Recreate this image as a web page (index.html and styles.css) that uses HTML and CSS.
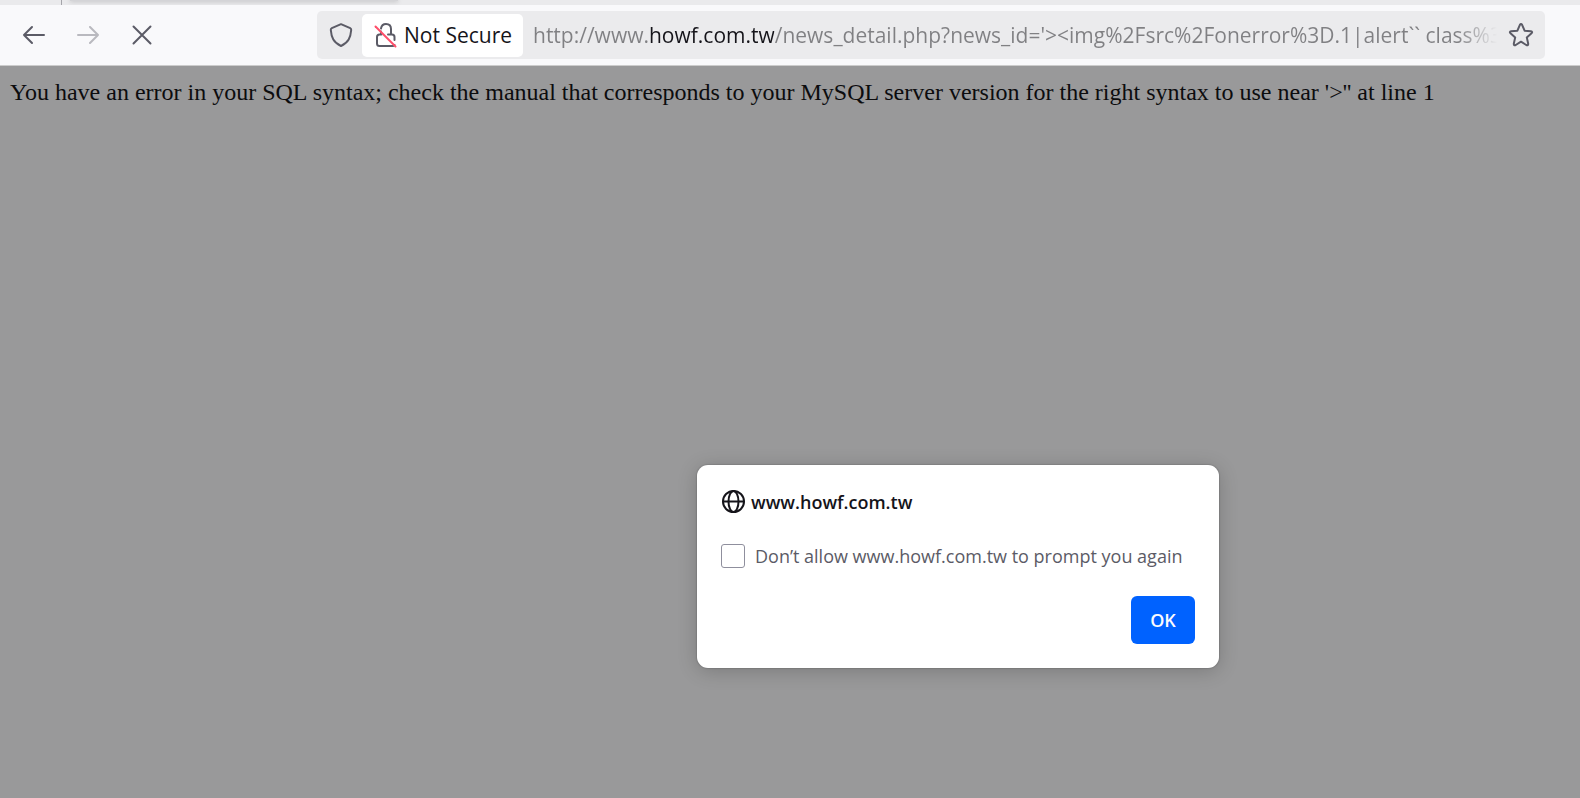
FILE: index.html
```html
<!DOCTYPE html>
<html lang="en">
<head>
  <meta charset="UTF-8" />
  <meta name="viewport" content="width=device-width, initial-scale=1.0" />
  <title>www.howf.com.tw</title>
  <link rel="stylesheet" href="styles.css">
</head>
<body>
<div class="tabstrip">
  <div class="tab-separator"></div>
  <div class="tab"></div>
</div>

<header class="toolbar">
  <nav class="nav-buttons">
    <button class="icon-button" type="button" aria-label="Back">
      <svg width="24" height="24" viewBox="0 0 24 24"><path d="M22 12H2M10 4l-8 8 8 8" /></svg>
    </button>
    <button class="icon-button" type="button" aria-label="Forward" disabled>
      <svg width="24" height="24" viewBox="0 0 24 24"><path d="M2 12h20M14 4l8 8-8 8" /></svg>
    </button>
    <button class="icon-button" type="button" aria-label="Stop">
      <svg width="24" height="24" viewBox="0 0 24 24"><path d="M3.5 3.5l17 17M20.500 3.500l-17 17" /></svg>
    </button>
  </nav>

  <div class="urlbar">
    <button class="shield" type="button" aria-label="Tracking protection">
      <svg width="24" height="26" viewBox="0 0 24 26"><path d="M12 2.200L21.200 6.100C22 6.500 22.300 7 22.200 8C21.600 15.500 19.500 20.500 12 24C4.500 20.500 2.400 15.500 1.800 8C1.700 7 2 6.500 2.800 6.100Z" /></svg>
    </button>
    <button class="identity" type="button">
      <svg width="24" height="26" viewBox="0 0 24 26">
        <path d="M7 6.500C7.500 3.500 9.500 2 12 2C15 2 17 4 17 7V11.500M7 9.500V12M7.500 12.500H5.500Q3 12.500 3 15V21.500Q3 24 5.500 24H18.500Q20 24 20.500 23M14 12.500H18Q20.500 12.500 20.500 15V18" />
        <path class="slash" d="M1.500 4.500L21.500 24.500" />
      </svg>
      <span>Not Secure</span>
    </button>
    <input class="url" type="text" aria-label="Address" spellcheck="false" value="http://www.howf.com.tw/news_detail.php?news_id='&gt;&lt;img%2Fsrc%2Fonerror%3D.1|alert`` class%3D1">
    <button class="bookmark" type="button" aria-label="Bookmark this page">
      <svg width="26" height="26" viewBox="0 0 26 26"><path d="M11.900 2.800Q13 1 14.100 2.800L16.600 8.700L22.900 9.300Q25 9.700 23.500 11.200L18.800 15.400L20.200 21.800Q20.300 24 18.300 23L13 19.700L7.700 23Q5.700 24 5.800 21.800L7.200 15.400L2.500 11.200Q1 9.700 3.100 9.300L9.400 8.700Z" /></svg>
    </button>
  </div>
</header>

<main class="page">
  <p class="error">You have an error in your SQL syntax; check the manual that corresponds to your MySQL server version for the right syntax to use near '&gt;'' at line 1</p>

  <div class="dialog" role="alertdialog" aria-labelledby="dialog-title">
    <div class="dialog-title">
      <svg width="24" height="24" viewBox="0 0 24 24"><circle cx="12.500" cy="11.500" r="10.500" /><ellipse cx="12.500" cy="11.500" rx="5" ry="10.500" /><path d="M2 11.500h21" /></svg>
      <span id="dialog-title">www.howf.com.tw</span>
    </div>
    <label class="dialog-check" for="block-prompts">
      <input type="checkbox" id="block-prompts">
      <span>Don’t allow www.howf.com.tw to prompt you again</span>
    </label>
    <button class="ok" type="button">OK</button>
  </div>
</main>
</body>
</html>
```
FILE: styles.css
```css
* {
  box-sizing: border-box;
}

html, body {
  margin: 0;
  height: 100%;
}

body {
  display: flex;
  flex-direction: column;
  overflow: hidden;
  background: #99999a;
  font-family: "Open Sans", "Noto Sans", sans-serif;
  color: #15141a;
}

button {
  border: 0;
  padding: 0;
  background: none;
  font: inherit;
  color: inherit;
}

svg {
  flex: none;
  fill: none;
  stroke: #5b5b66;
  stroke-width: 2;
  stroke-linecap: round;
  stroke-linejoin: round;
}

.tabstrip {
  display: flex;
  flex: none;
  height: 5px;
  padding-left: 61px;
  gap: 8px;
  background: #eaeaec;
  overflow: hidden;
}

.tab-separator {
  width: 1px;
  background: #a5a5aa;
}

/* bottom edge of the selected tab */
.tab {
  width: 328px;
  height: 1px;
  background: #d4d4d7;
  box-shadow: 0 0 4px rgba(0, 0, 0, 0.5);
}

.toolbar {
  display: flex;
  flex: none;
  align-items: center;
  height: 61px;
  padding-right: 35px;
  background: #f9f9fb;
  border-bottom: 1px solid #cccccc;
}

.nav-buttons {
  display: flex;
  width: 317px;
  padding-left: 22px;
  gap: 30px;
}

.icon-button {
  display: flex;
}

.icon-button:disabled {
  opacity: 0.4;
}

.urlbar {
  display: flex;
  flex: 1;
  align-items: center;
  min-width: 0;
  height: 48px;
  padding-right: 11px;
  background: #ebebed;
  border-radius: 5px;
}

.shield {
  display: flex;
  width: 45px;
  padding-left: 12px;
}

.identity {
  display: flex;
  align-items: center;
  width: 161px;
  height: 43px;
  padding-left: 12px;
  gap: 6px;
  background: #ffffff;
  border-radius: 5px;
  font-size: 21px;
  white-space: nowrap;
}

.slash {
  stroke: #ff4f6a;
}

/* the host part is dark, the rest is dimmed and fades out on the right */
.url {
  flex: 1;
  min-width: 0;
  height: 43px;
  margin: 0 11px 0 10px;
  padding: 0;
  border: 0;
  outline: 0;
  font-family: "Open Sans", "Noto Sans", sans-serif;
  font-size: 21px;
  color: #808083;
  background: linear-gradient(to right, #808083 115px, #15141a 115px, #15141a 241px, #808083 241px, #808083 calc(100% - 40px), transparent);
  -webkit-background-clip: text;
  background-clip: text;
  -webkit-text-fill-color: transparent;
}

.bookmark {
  display: flex;
}

.page {
  position: relative;
  flex: 1;
}

.error {
  margin: 0;
  padding: 12px 10px;
  font-family: "Liberation Serif", "Times New Roman", serif;
  font-size: 24px;
  line-height: 28px;
  color: #0c0c0e;
}

.dialog {
  position: absolute;
  top: 399px;
  left: 697px;
  display: flex;
  flex-direction: column;
  width: 522px;
  padding: 24px;
  background: #ffffff;
  border-radius: 11px;
  box-shadow: 0 0 1px 1px rgba(0, 0, 0, 0.1), 0 3px 20px rgba(0, 0, 0, 0.2);
}

.dialog-title {
  display: flex;
  align-items: center;
  gap: 6px;
  height: 26px;
  font-size: 18px;
  font-weight: 600;
}

.dialog-title svg {
  stroke: #15141a;
}

.dialog-check {
  display: flex;
  align-items: center;
  gap: 10px;
  height: 26px;
  margin-top: 28px;
  font-size: 18px;
  color: #5b5b66;
  white-space: nowrap;
}

.dialog-check input {
  appearance: none;
  flex: none;
  width: 24px;
  height: 24px;
  margin: 0;
  background: #ffffff;
  border: 1px solid #8f8f9d;
  border-radius: 3px;
}

.ok {
  align-self: flex-end;
  width: 64px;
  height: 48px;
  margin-top: 27px;
  background: #0062ff;
  border-radius: 6px;
  font-size: 18px;
  font-weight: 600;
  color: #fbfbfe;
}
```
